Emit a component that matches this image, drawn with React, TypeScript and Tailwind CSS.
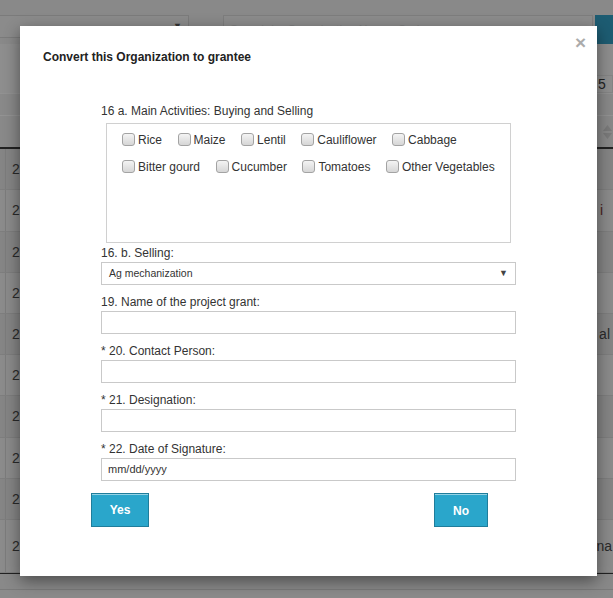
import React from "react";

const firstRow = ["Rice", "Maize", "Lentil", "Cauliflower", "Cabbage"];
const secondRow = ["Bitter gourd", "Cucumber", "Tomatoes", "Other Vegetables"];

// background table rows (dimmed by the modal backdrop)
const tableRows = [
  { h: "h-[41px]", bg: "bg-[#858585]", right: "", pad: "pr-[1px]" },
  { h: "h-[42px]", bg: "bg-[#8b8b8b]", right: "i", pad: "pr-[10px]" },
  { h: "h-[41px]", bg: "bg-[#858585]", right: "", pad: "pr-[1px]" },
  { h: "h-[41px]", bg: "bg-[#8b8b8b]", right: "", pad: "pr-[1px]" },
  { h: "h-[41px]", bg: "bg-[#858585]", right: "al", pad: "pr-[3px]" },
  { h: "h-[41px]", bg: "bg-[#8b8b8b]", right: "", pad: "pr-[1px]" },
  { h: "h-[42px]", bg: "bg-[#858585]", right: "", pad: "pr-[1px]" },
  { h: "h-[41px]", bg: "bg-[#8b8b8b]", right: "", pad: "pr-[1px]" },
  { h: "h-[41px]", bg: "bg-[#858585]", right: "", pad: "pr-[1px]" },
  { h: "h-[53px]", bg: "bg-[#8b8b8b]", right: "na", pad: "pr-[1px]" },
];

function Check({ label }: { label: string }) {
  return (
    <label className="flex items-center mr-[15.5px] whitespace-nowrap">
      <span className="w-[13px] h-[13px] shrink-0 rounded-[3px] border border-[#a3a3a3] bg-gradient-to-b from-[#f4f4f4] to-[#d6d6d6]" />
      <span className="ml-[3px]">{label}</span>
    </label>
  );
}

function Field({ label, value }: { label: string; value?: string }) {
  return (
    <div className="mb-[9px]">
      <div className="h-[17px] leading-[17px]">{label}</div>
      <div className="h-[23px] border border-[#c9c9c9] bg-white flex items-center pl-[7px] text-[11px] text-[#333]">
        {value}
      </div>
    </div>
  );
}

export default function App() {
  return (
    <div className="relative w-[613px] h-[598px] overflow-hidden bg-[#898989] font-['Liberation_Sans',Arial,sans-serif] text-[12px]">
      {/* page behind the backdrop */}
      <div className="pt-[15px]">
        <div className="flex h-[29px]">
          <div className="w-[189px] h-[23px] border-t border-r border-b border-[#7b7b7b] bg-[#8b8b8b] flex justify-end items-start pr-[6px] pt-[4px] text-[9px] text-[#333]">
            ▼
          </div>
          <div className="ml-[34px] w-[370px] h-[29px] border border-[#7d7d7d] bg-[#8c8c8c] px-[6px] pt-[5px] text-[12px] text-[#7f7f7f]">
            Search by Organization Name, Code
          </div>
          <div className="ml-[2px] flex-1 bg-[#1d5c72]" />
        </div>
        <div className="h-[49px] bg-[#8e8e8e] flex justify-end items-end">
          <div className="w-[18px] h-[18px] bg-[#8f8f8f] border border-[#858585] text-[14px] leading-[16px] text-[#222] pl-[2px]">
            5
          </div>
        </div>
        <div className="h-[22px] border-t border-[#929292]" />
        <div className="h-[32px] border-t border-[#939393] flex justify-end items-center pr-[1px]">
          <span className="w-[2px] h-[6px] bg-[#4d7f8a] mr-[6px]" />
          <svg width="9" height="14" viewBox="0 0 9 14" fill="#7a7a7a">
            <path d="M4.5 0 L9 6 L0 6 Z" />
            <path d="M0 8 L9 8 L4.5 14 Z" />
          </svg>
        </div>
        <div className="border-t-2 border-[#222]">
          {tableRows.map((r, i) => (
            <div key={i} className={`${r.h} ${r.bg} border-b border-[#7e7e7e] flex items-center`}>
              <div className="w-[6px] h-full border-r border-[#7c7c7c]" />
              <div className="ml-[6px] text-[14px] text-[#2a2a2a]">2</div>
              <div className={`ml-auto ${r.pad} text-[14px] ${r.right === "i" ? "text-[#4a1e1e]" : "text-[#2a2a2a]"}`}>
                {r.right}
              </div>
            </div>
          ))}
        </div>
        <div className="border-t border-[#222] h-[16px]" />
        <div className="border-t border-[#7a7a7a] h-[20px] bg-[#8b8b8b]" />
      </div>

      {/* modal */}
      <div className="absolute left-[20px] top-[26px] w-[577px] h-[550px] bg-white shadow-[0_5px_15px_rgba(0,0,0,0.45)] text-[#333]">
        <div className="relative pt-[24px] pl-[23px]">
          <h4 className="text-[12px] leading-[15px] font-bold text-[#222]">Convert this Organization to grantee</h4>
          <span className="absolute right-[11px] top-[7px] text-[19px] font-bold leading-[19px] text-[#ababab]">×</span>
        </div>

        <div className="mt-[38px] ml-[81px] w-[415px]">
          <div className="h-[17px] leading-[17px] mb-[3px]">16 a. Main Activities: Buying and Selling</div>
          <div className="ml-[5px] w-[405px] h-[120px] border border-[#d0d0d0] pl-[15px] pt-[2px]">
            <div className="flex h-[27px] items-center">
              {firstRow.map((l) => (
                <Check key={l} label={l} />
              ))}
            </div>
            <div className="flex h-[27px] items-center">
              {secondRow.map((l) => (
                <Check key={l} label={l} />
              ))}
            </div>
          </div>

          <div className="mt-[2px] h-[17px] leading-[17px]">16. b. Selling:</div>
          <div className="h-[23px] border border-[#c9c9c9] flex items-center pl-[7px] pr-[7px] text-[10.5px] text-[#333] mb-[9px]">
            <span>Ag mechanization</span>
            <span className="ml-auto text-[9px] text-[#444]">▼</span>
          </div>

          <Field label="19. Name of the project grant:" />
          <Field label="* 20. Contact Person:" />
          <Field label="* 21. Designation:" />
          <div>
            <div className="h-[17px] leading-[17px]">* 22. Date of Signature:</div>
            <div className="h-[23px] border border-[#c9c9c9] flex items-center pl-[6px] text-[11px] text-[#333]">
              mm/dd/yyyy
            </div>
          </div>
        </div>

        <div className="mt-[12px] ml-[71px] w-[397px] flex justify-between">
          <button className="w-[58px] h-[34px] bg-[#2aa6cb] border border-[#1f7d9b] shadow-[inset_0_1px_0_rgba(255,255,255,0.5)] text-white font-bold text-[12px]">
            Yes
          </button>
          <button className="w-[54px] h-[34px] bg-[#2aa6cb] border border-[#1f7d9b] shadow-[inset_0_1px_0_rgba(255,255,255,0.5)] text-white font-bold text-[12px] pt-[2px]">
            No
          </button>
        </div>
      </div>
    </div>
  );
}
